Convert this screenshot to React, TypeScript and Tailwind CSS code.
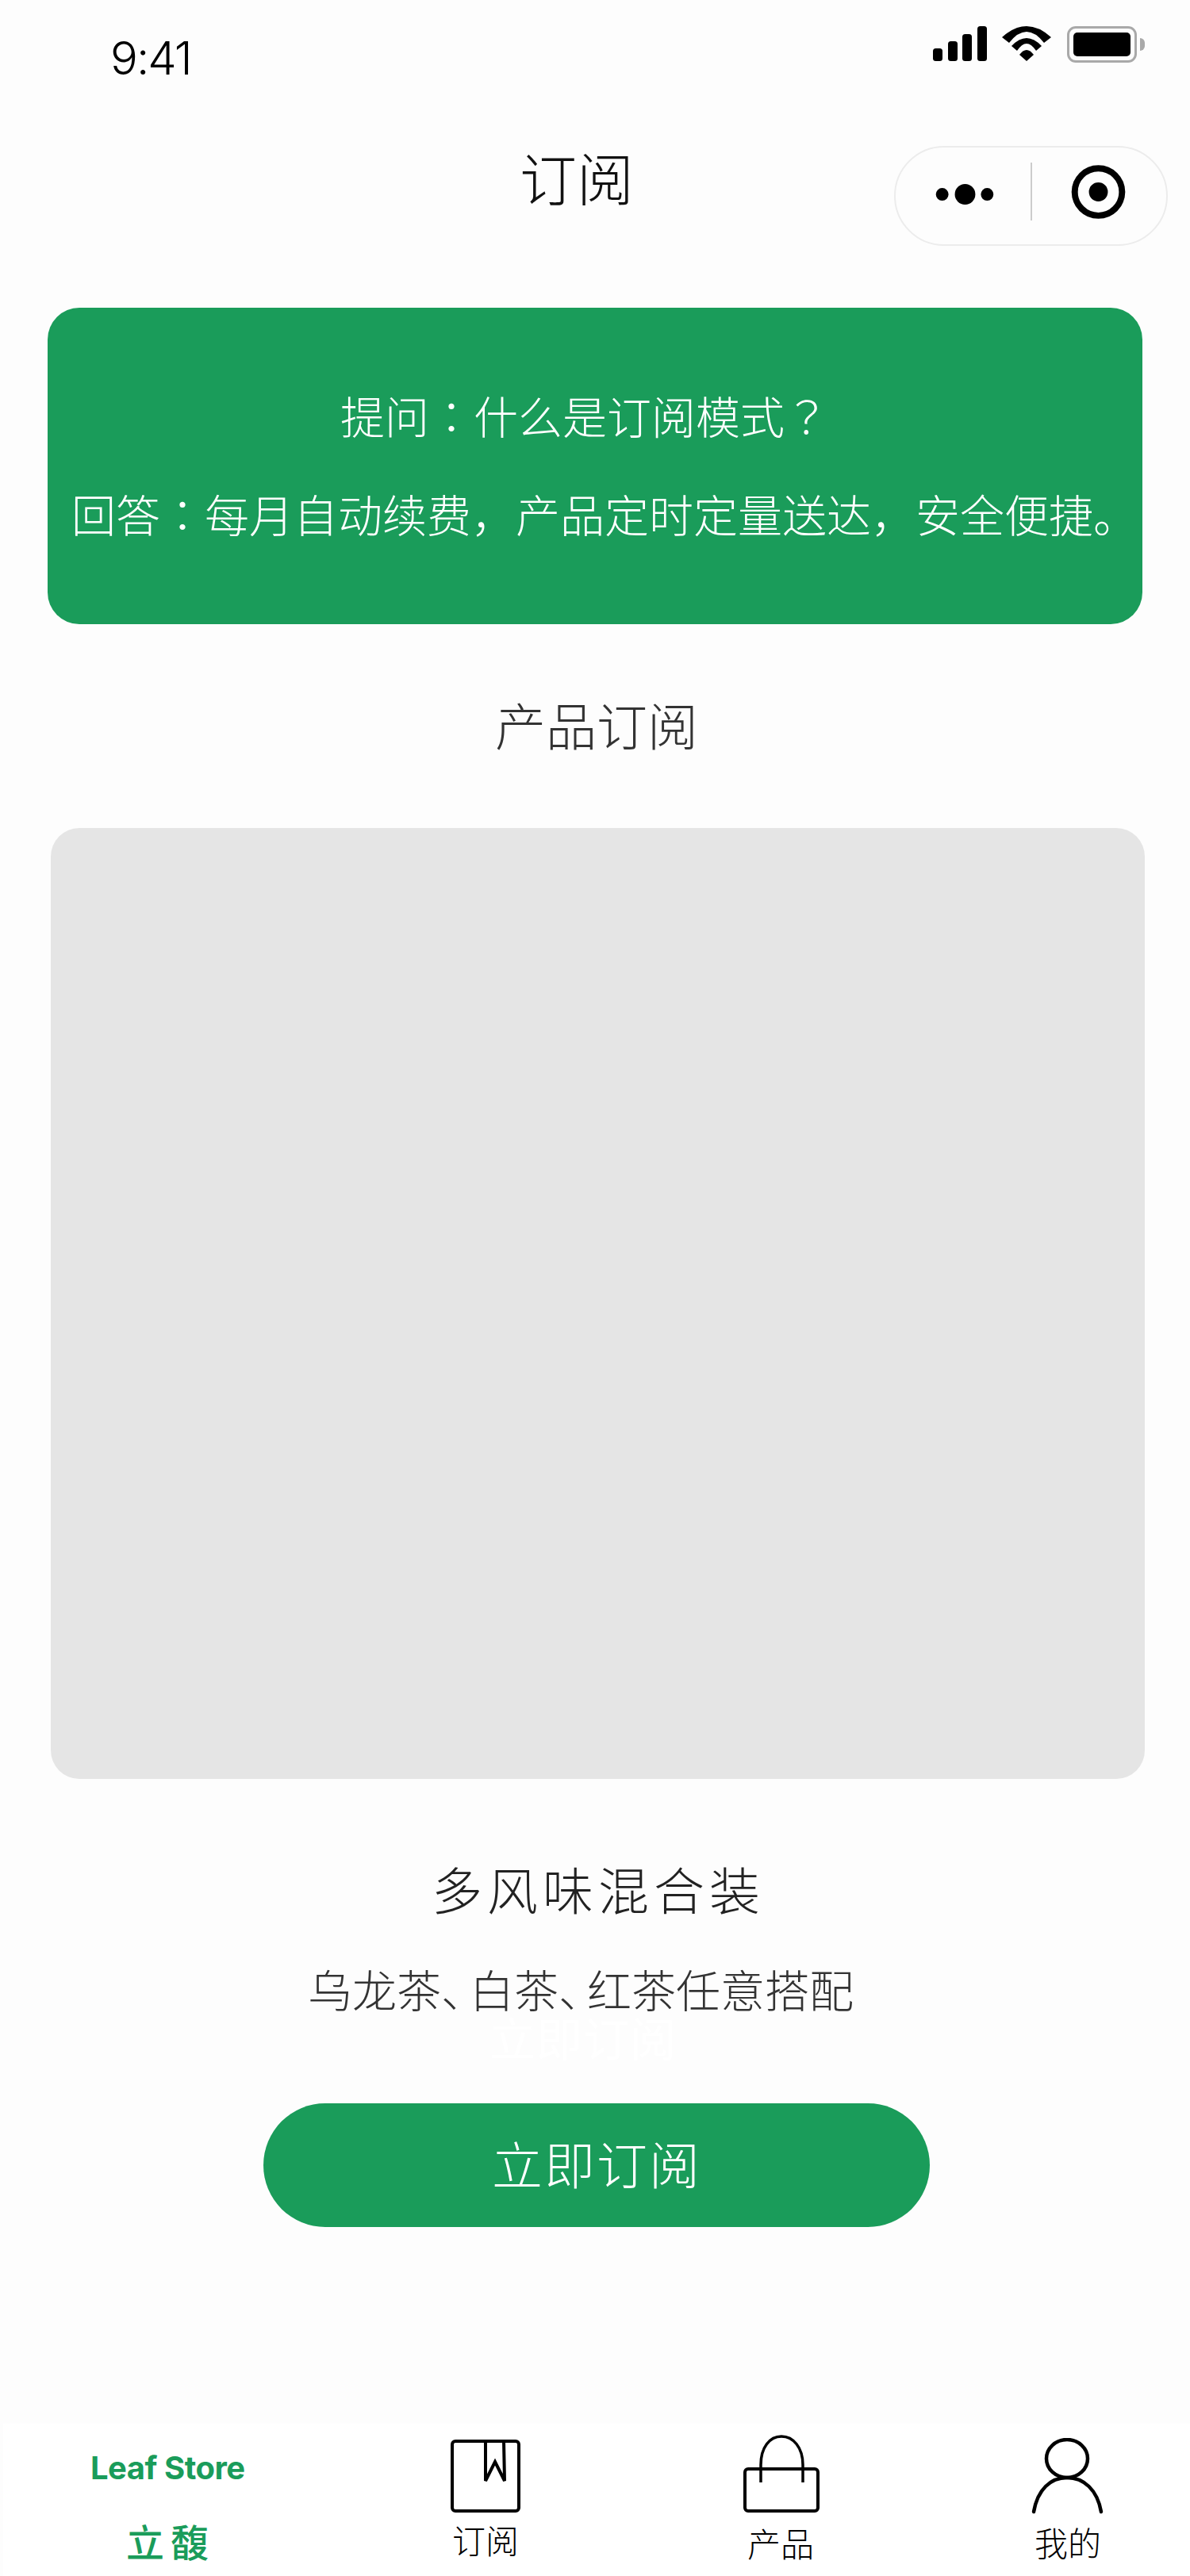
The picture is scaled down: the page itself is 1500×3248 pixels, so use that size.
import React from 'react';

const cjk = "font-['Noto_Sans_CJK_SC','Noto_Sans_CJK_JP',sans-serif]";

// 冒号、问号在原图里是居中的，用繁体字形
const Tc: React.FC<{ children: React.ReactNode }> = ({ children }) => (
  <span className="font-['Noto_Sans_CJK_TC',sans-serif]">{children}</span>
);

const StatusIcons = () => (
  <div className="flex items-start">
    <svg width="68" height="44" viewBox="0 0 68 44" className="mt-[33px]">
      <rect x="0" y="28" width="12" height="16" rx="3.5" fill="#000" />
      <rect x="19" y="19" width="12" height="25" rx="3.5" fill="#000" />
      <rect x="37" y="10" width="12" height="34" rx="3.5" fill="#000" />
      <rect x="56" y="0" width="12" height="44" rx="3.5" fill="#000" />
    </svg>
    <svg width="62" height="44" viewBox="0 0 62 44" className="mt-[33px] ml-[19px]">
      <path d="M0 14Q31 -14 62 14L53 21Q31 -7 9 21Z" fill="#000" />
      <path d="M12 25Q31 5 50 25L43 31Q31 13 19 31Z" fill="#000" />
      <path d="M22 36Q31 24 40 36L31 44Z" fill="#000" />
    </svg>
    <div className="mt-[33px] ml-[20px] flex items-center">
      <div className="w-[88px] h-[46px] rounded-[11px] border-[3px] border-[#a9a9a9] p-[5px]">
        <div className="w-full h-full rounded-[5px] bg-black" />
      </div>
      <div className="ml-[4px] w-[6px] h-[16px] rounded-r-[6px] bg-[#a9a9a9]" />
    </div>
  </div>
);

const Capsule = () => (
  <div className="w-[345px] h-[126px] rounded-[63px] border-2 border-[#ececec] flex items-center">
    <svg width="171" height="122" viewBox="0 0 171 122">
      <circle cx="59" cy="59" r="8" fill="#000" />
      <circle cx="88" cy="59" r="13" fill="#000" />
      <circle cx="116" cy="59" r="8" fill="#000" />
    </svg>
    <div className="w-[2px] h-[73px] bg-[#cccccc] -mt-[11px]" />
    <svg width="170" height="122" viewBox="0 0 170 122">
      <circle cx="84" cy="56" r="30" fill="none" stroke="#000" strokeWidth="8" />
      <circle cx="84" cy="56" r="12" fill="#000" />
    </svg>
  </div>
);

const BookmarkIcon = () => (
  <svg width="88" height="92" viewBox="0 0 88 92">
    <rect x="2" y="2" width="84" height="88" rx="4" fill="none" stroke="#000" strokeWidth="4" />
    <path d="M44 2V52L56 28L68 52L67 2" fill="none" stroke="#000" strokeWidth="4" />
  </svg>
);

const BagIcon = () => (
  <svg width="96" height="98" viewBox="0 0 96 98">
    <rect x="2" y="43" width="92" height="53" rx="4" fill="none" stroke="#000" strokeWidth="4" />
    <path d="M22 60V38C22 16 33 2 48 2C63 2 75 16 75 38V60" fill="none" stroke="#000" strokeWidth="3.5" />
  </svg>
);

const UserIcon = () => (
  <svg width="92" height="96" viewBox="0 0 92 96">
    <ellipse cx="45" cy="26" rx="26" ry="24" fill="none" stroke="#000" strokeWidth="4.5" />
    <path d="M3 93C8 65 24 50 45 50C66 50 83 65 88 93" fill="none" stroke="#000" strokeWidth="4.5" strokeLinecap="round" />
  </svg>
);

export default function App() {
  return (
    <div className={`w-[1500px] h-[3248px] bg-[#fdfdfd] flex flex-col overflow-hidden font-light ${cjk}`}>
      {/* 状态栏 */}
      <div className="h-[108px] flex justify-between pl-[139px] pr-[57px]">
        <span className="mt-[41px] text-[58px] leading-[64px] tracking-[-2px] font-['Inter',sans-serif] font-light text-black">
          9:41
        </span>
        <StatusIcons />
      </div>

      {/* 标题栏 */}
      <div className="mt-[76px] h-[126px] flex justify-between pl-[655px] pr-[28px]">
        <span className="-mt-[6px] text-[72px] leading-[88px] text-[#111111]">订阅</span>
        <Capsule />
      </div>

      {/* 问答卡片 */}
      <div className="mt-[78px] mx-[60px] h-[399px] rounded-[40px] bg-[#1a9c5a] text-white text-[56px] leading-[56px] pt-[107px]">
        <p className="ml-[369px]">提问<Tc>：</Tc>什么是订阅模式<Tc>？</Tc></p>
        <p className="mt-[68px] ml-[30px] whitespace-nowrap">回答<Tc>：</Tc>每月自动续费，产品定时定量送达，安全便捷。</p>
      </div>

      <h2 className="mt-[93px] pl-[4px] text-center text-[64px] leading-[64px] font-light text-[#333333]">产品订阅</h2>

      <div className="mt-[100px] ml-[64px] w-[1379px] h-[1199px] rounded-[36px] bg-[#e5e5e5]" />

      <p className="mt-[105px] pl-[8px] text-center text-[64px] leading-[64px] tracking-[6px] text-[#222222]">多风味混合装</p>
      <p className="mt-[65px] pr-[36px] text-center text-[56px] leading-[60px] text-[#333333] whitespace-nowrap">
        乌龙茶<span className="tracking-[-20px]">、</span>白茶<span className="tracking-[-20px]">、</span>红茶任意搭配
      </p>
      <p className="mt-[3px] pr-[30px] text-center text-[58px] leading-[56px] tracking-[1px] font-normal text-white">立即订阅</p>

      <button className="mt-[56px] ml-[332px] w-[840px] h-[156px] rounded-full bg-[#1a9c5a] text-white text-[64px] leading-[64px] tracking-[2px] pb-[8px]">
        立即订阅
      </button>

      {/* 底部导航 */}
      <nav className="mt-auto ml-[4px] h-[192px] bg-white flex text-black">
        <div className="w-[406px] pl-[110px] flex flex-col">
          <span className="mt-[36px] text-[40px] leading-[40px] font-bold tracking-[-0.5px] text-[#1a9c5a] font-['Inter',sans-serif] whitespace-nowrap">
            Leaf Store
          </span>
          <span className="mt-[44px] pl-[45px] text-[48px] leading-[54px] font-medium tracking-[8px] text-[#1a9c5a]">立馥</span>
        </div>
        <div className="w-[376px] flex flex-col">
          <div className="mt-[20px] ml-[158px] h-[92px]"><BookmarkIcon /></div>
          <span className="mt-[12px] ml-[160px] text-[42px] leading-[44px]">订阅</span>
        </div>
        <div className="w-[357px] flex flex-col">
          <div className="mt-[14px] ml-[151px] h-[98px]"><BagIcon /></div>
          <span className="mt-[16px] ml-[156px] text-[42px] leading-[44px]">产品</span>
        </div>
        <div className="flex flex-col">
          <div className="mt-[18px] ml-[157px] h-[96px]"><UserIcon /></div>
          <span className="mt-[13px] ml-[161px] text-[42px] leading-[44px]">我的</span>
        </div>
      </nav>
    </div>
  );
}
